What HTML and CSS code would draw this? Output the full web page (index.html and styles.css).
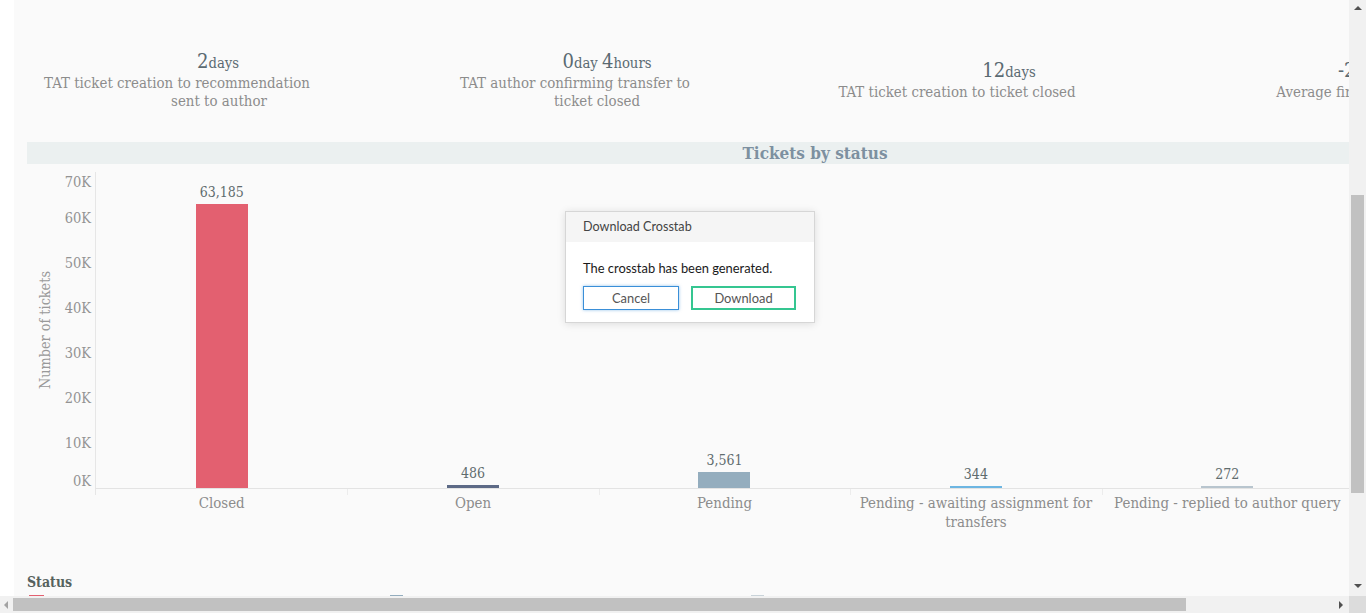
FILE: index.html
```html
<!DOCTYPE html>
<html>
<head>
<meta charset="utf-8">
<link rel="stylesheet" href="styles.css">
</head>
<body>
<div class="app">
  <div class="viewport">
    <div class="dash">
      <div class="kpis">
        <div class="kpi">
          <div class="kv k1v"><span class="num">2</span>days</div>
          <div class="kl k1a">TAT ticket creation to recommendation</div>
          <div class="kl k1b">sent to author</div>
        </div>
        <div class="kpi">
          <div class="kv k2v"><span class="num">0</span>day <span class="num">4</span>hours</div>
          <div class="kl k2a">TAT author confirming transfer to</div>
          <div class="kl k2b">ticket closed</div>
        </div>
        <div class="kpi">
          <div class="kv k3v"><span class="num">12</span>days</div>
          <div class="kl k3a">TAT ticket creation to ticket closed</div>
        </div>
        <div class="kpi">
          <div class="kv k4v"><span class="num">-2</span>days</div>
          <div class="kl k4a">Average first response time</div>
        </div>
      </div>

      <div class="band"><span class="band-title">Tickets by status</span></div>

      <div class="chart">
        <div class="yaxis">
          <div class="ytitle"><span>Number of tickets</span></div>
          <div class="yticks">
            <span class="tick tick-top">70K</span>
            <span class="tick">60K</span>
            <span class="tick">50K</span>
            <span class="tick">40K</span>
            <span class="tick">30K</span>
            <span class="tick">20K</span>
            <span class="tick">10K</span>
            <span class="tick tick-bot">0K</span>
          </div>
        </div>
        <div class="plotwrap">
          <div class="plot">
            <div class="col"><span class="val">63,185</span><div class="bar bar-closed" style="height:284px"></div></div>
            <div class="col"><span class="val">486</span><div class="bar bar-open" style="height:3px"></div></div>
            <div class="col"><span class="val">3,561</span><div class="bar bar-pending" style="height:16px"></div></div>
            <div class="col"><span class="val">344</span><div class="bar bar-await" style="height:2px"></div></div>
            <div class="col"><span class="val">272</span><div class="bar bar-replied" style="height:2px"></div></div>
          </div>
          <div class="xlabels">
            <div class="xl">Closed</div>
            <div class="xl">Open</div>
            <div class="xl">Pending</div>
            <div class="xl">Pending - awaiting assignment for transfers</div>
            <div class="xl">Pending - replied to author query</div>
          </div>
        </div>
      </div>

      <div class="legend">
        <div class="ltitle">Status</div>
        <div class="lrow">
          <div class="litem"><span class="sw sw-closed"></span></div>
          <div class="litem"><span class="sw sw-pending"></span></div>
          <div class="litem"><span class="sw sw-replied"></span></div>
        </div>
      </div>
    </div>
  </div>

  <div class="vscroll">
    <span class="arr arr-up"></span>
    <div class="vtrack"><div class="vthumb"></div></div>
    <span class="arr arr-down"></span>
  </div>
  <div class="hscroll">
    <span class="arr arr-left"></span>
    <div class="htrack"><div class="hthumb"></div></div>
    <span class="arr arr-right"></span>
  </div>
  <div class="corner"></div>

  <div class="dialog">
    <div class="dlg-head">Download Crosstab</div>
    <div class="dlg-body">
      <p class="dlg-text">The crosstab has been generated.</p>
      <div class="dlg-actions">
        <button class="btn btn-cancel">Cancel</button>
        <button class="btn btn-download">Download</button>
      </div>
    </div>
  </div>
</div>
</body>
</html>
```

FILE: styles.css
```css
* { box-sizing: border-box; }
html, body { margin: 0; padding: 0; }
body {
  width: 1366px;
  height: 613px;
  overflow: hidden;
  background: #ffffff;
  font-family: "DejaVu Serif Condensed", "DejaVu Serif", serif;
}

.app {
  position: relative;
  width: 1366px;
  height: 613px;
  display: grid;
  grid-template-columns: 1349px 17px;
  grid-template-rows: 596px 17px;
}

.viewport {
  overflow: hidden;
  background: #ffffff;
}

.dash {
  margin-left: 14px;
  width: 1620px;
  height: 596px;
  background: #fafafa;
  padding-left: 13px;
}

/* KPI row */
.kpis {
  display: grid;
  grid-template-columns: repeat(4, 394px);
  height: 142px;
  padding-top: 18px;
  align-items: center;
}
.kpi { text-align: center; }
.kv {
  color: #5a6a72;
  font-size: 14.7px;
  line-height: 22px;
  white-space: nowrap;
}
.kv .num { font-size: 20px; }
.kl {
  color: #8c8c8c;
  font-size: 14.9px;
  line-height: 18px;
  white-space: nowrap;
}
.k1v { padding-right: 12px; }
.k1a { padding-right: 94px; }
.k1b { padding-right: 10px; }
.k2v { padding-right: 22px; }
.k2a { padding-right: 86px; }
.k2b { padding-right: 42px; }
.k3v { padding-right: 6px; }
.k3a { padding-right: 110px; }
.k4v { padding-right: 88px; }
.k4a { padding-right: 72px; }

/* header band */
.band {
  width: 1576px;
  height: 22px;
  background: #ebf0f0;
  text-align: center;
}
.band-title {
  font-weight: bold;
  font-size: 17px;
  line-height: 22px;
  color: #7d90a0;
}

/* chart */
.chart {
  display: flex;
  margin-top: 8px;
}
.yaxis {
  display: flex;
  width: 68px;
}
.ytitle {
  width: 36px;
  height: 316px;
  display: flex;
  align-items: center;
  justify-content: center;
}
.ytitle span {
  writing-mode: vertical-rl;
  transform: rotate(180deg);
  color: #999999;
  font-size: 14.3px;
  white-space: nowrap;
}
.yticks {
  width: 32px;
  height: 316px;
  display: flex;
  flex-direction: column;
  padding-right: 4px;
}
.tick {
  display: block;
  height: 45px;
  line-height: 45px;
  text-align: right;
  color: #939393;
  font-size: 14.5px;
}
.tick-top { height: 23.5px; line-height: 20px; }
.tick-bot { height: 22.5px; line-height: 16px; padding-top: 7px; }

.plotwrap {
  width: 1258px;
}
.plot {
  height: 317px;
  display: grid;
  grid-template-columns: repeat(5, 1fr);
  border-left: 1px solid #e6e6e6;
  border-bottom: 1px solid #e3e3e3;
}
.col {
  display: flex;
  flex-direction: column;
  justify-content: flex-end;
  align-items: center;
}
.val {
  color: #5f6c6e;
  font-size: 14px;
  line-height: 18px;
  margin-bottom: 3px;
}
.bar { width: 52px; }
.bar-closed { background: #e36070; }
.bar-open { background: #5d6a86; }
.bar-pending { background: #94adbe; }
.bar-await { background: #6db6e2; }
.bar-replied { background: #b8c5ce; }

.xlabels {
  display: grid;
  grid-template-columns: repeat(5, 1fr);
  padding-left: 1px;
  background: linear-gradient(#e6e6e6, #e6e6e6) left top / 1px 6px no-repeat;
}
.xl {
  text-align: center;
  color: #8c8c8c;
  font-size: 14.9px;
  line-height: 19px;
  padding: 5px 6px 0;
  background: linear-gradient(#ececec, #ececec) left top / 1px 6px no-repeat;
}
.xl:first-child { background: none; }

/* legend */
.legend { margin-top: 41px; }
.ltitle {
  font-weight: bold;
  color: #56625f;
  font-size: 14px;
  line-height: 18px;
}
.lrow {
  display: flex;
  padding-left: 2px;
  margin-top: 4px;
}
.litem { width: 361px; }
.sw { display: block; width: 15px; height: 10px; }
.sw-closed { background: #e36070; }
.sw-pending { background: #94adbe; width: 13px; }
.sw-replied { background: #c9d3d9; width: 13px; }

/* scrollbars */
.vscroll {
  background: #f1f1f1;
  display: flex;
  flex-direction: column;
  align-items: center;
}
.vtrack { flex: 1; width: 100%; padding: 0 2px; }
.vthumb {
  margin-top: 178px;
  height: 298px;
  background: #c1c1c1;
}
.hscroll {
  background: #f1f1f1;
  display: flex;
  align-items: center;
}
.htrack { flex: 1; height: 100%; padding: 2px 0; }
.hthumb {
  width: 1173px;
  height: 100%;
  background: #c1c1c1;
}
.corner { background: #dcdcdc; }

.arr { display: block; width: 0; height: 0; }
.arr-up {
  margin: 6px 0 7px;
  border-left: 4px solid transparent;
  border-right: 4px solid transparent;
  border-bottom: 4px solid #505050;
}
.arr-down {
  margin: 7px 0 8px;
  border-left: 4px solid transparent;
  border-right: 4px solid transparent;
  border-top: 4px solid #505050;
}
.arr-left {
  margin: 0 5px 0 4px;
  border-top: 4px solid transparent;
  border-bottom: 4px solid transparent;
  border-right: 4px solid #a3a3a3;
}
.arr-right {
  margin: 0 8px 0 153px;
  border-top: 4px solid transparent;
  border-bottom: 4px solid transparent;
  border-left: 4px solid #505050;
}

/* dialog overlay */
.dialog {
  position: absolute;
  left: 565px;
  top: 211px;
  width: 250px;
  background: #ffffff;
  border: 1px solid #d6d6d6;
  box-shadow: 0 1px 8px rgba(0, 0, 0, 0.12);
  font-family: Lato, "Open Sans", sans-serif;
  font-size: 12px;
}
.dlg-head {
  height: 30px;
  line-height: 29px;
  background: #f5f5f5;
  color: #444444;
  padding-left: 17px;
  font-size: 12.6px;
}
.dlg-body { padding: 18px 17px 12px; }
.dlg-text {
  margin: 0 0 10px;
  color: #1a1a1a;
  line-height: 16px;
  font-size: 12.9px;
}
.dlg-actions { display: flex; gap: 12px; }
.btn {
  height: 24px;
  background: #ffffff;
  font-family: Lato, "Open Sans", sans-serif;
  font-size: 12.9px;
  color: #555555;
  padding: 0;
}
.btn-cancel {
  width: 96px;
  border: 1px solid #3a8fd8;
  box-shadow: 0 0 3px rgba(58, 143, 216, 0.55);
}
.btn-download {
  width: 105px;
  border: 2px solid #35c691;
}
```
